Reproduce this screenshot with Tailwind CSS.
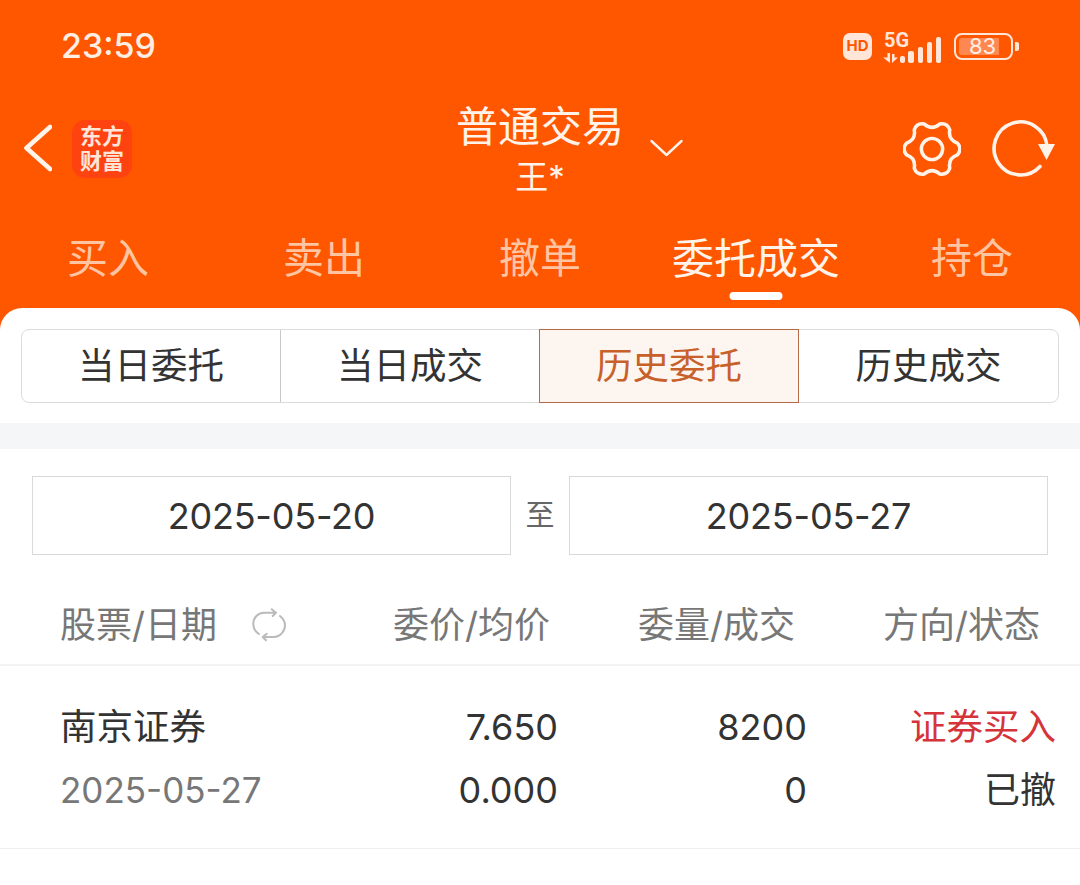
<!DOCTYPE html>
<html lang="zh-CN">
<head>
  <meta charset="UTF-8" />
  <meta name="viewport" content="width=device-width, initial-scale=1.0" />
  <title>普通交易</title>
  <script src="https://cdn.jsdelivr.net/npm/@tailwindcss/browser@4"></script>
</head>
<body class="w-[1080px] h-[885px] overflow-hidden bg-[#ff5600] font-['Inter','Noto_Sans_CJK_SC',sans-serif]">

  <!-- status bar -->
  <div class="h-[92px] flex items-center justify-between pl-[61px] pr-[61px] text-[#ffeee3]">
    <span class="text-[34px] font-medium leading-none">23:59</span>
    <div class="flex items-center gap-[11px]">
      <span class="w-[29px] h-[27px] rounded-[7px] bg-[#ffe6d8] text-[#ff5600] text-[15px] font-bold flex items-center justify-center">HD</span>
      <svg class="w-[60px] h-[44px]" viewBox="0 -8 60 44" fill="#ffe6d8">
        <text x="1" y="15" font-size="20" font-weight="700" font-family="Roboto">5G</text>
        <path d="M4.500 21H7v10L0 25.500h4.500zM9 22h2.500v3.500H15L9 31z" />
        <rect x="17" y="24" width="5" height="7" rx="2" />
        <rect x="25" y="19" width="6" height="12" rx="2" />
        <rect x="35" y="15" width="5" height="16" rx="2" />
        <rect x="44" y="10" width="5" height="21" rx="2" />
        <rect x="53" y="5" width="5" height="26" rx="2" />
      </svg>
      <div class="flex items-center gap-[2px]">
        <div class="relative w-[59px] h-[27px] rounded-[8px] border-[2px] border-[#ffe6d8] p-[3px]">
          <div class="h-full w-[40px] rounded-l-[3px] bg-[#ff8752]"></div>
          <span class="absolute inset-0 flex items-center justify-center pr-[2px] text-[22px] leading-none text-[#ffeee3]">83</span>
        </div>
        <span class="w-[4px] h-[9px] rounded-r-[2px] bg-[#ffe6d8]"></span>
      </div>
    </div>
  </div>

  <!-- title bar -->
  <div class="relative h-[113px] flex items-start justify-center text-[#fff3ea]">
    <svg class="absolute left-[24px] top-[32px] w-[28px] h-[48px]" viewBox="0 0 28 48" fill="none" stroke="#fff3ea" stroke-width="4.6" stroke-linecap="round" stroke-linejoin="round"><path d="M26 3 2.500 24 26 45" /></svg>
    <div class="absolute left-[72px] top-[28px] w-[60px] h-[58px] rounded-[13px] bg-[#ff4310] flex items-center justify-center text-center text-[#ffe6d8] text-[22px] font-bold leading-[25px]">
      <span>东方<br />财富</span>
    </div>
    <div class="flex flex-col items-center pt-[10px]">
      <span class="text-[42px] leading-[50px]">普通交易</span>
      <span class="text-[33px] leading-[50px]">王*</span>
    </div>
    <svg class="absolute left-[650px] top-[47px] w-[33px] h-[18px]" viewBox="0 0 33 18" fill="none" stroke="#fff3ea" stroke-width="2.4" stroke-linecap="round" stroke-linejoin="round"><path d="M1.500 2 16.500 16l15-14" /></svg>
    <svg class="absolute left-[903px] top-[28px] w-[58px] h-[58px]" viewBox="0 0 60 60" fill="none" stroke="#fff3ea" stroke-width="3.6" stroke-linejoin="round">
      <path d="M56.300 23.900Q61.500 30 56.300 36.100Q46.500 39.500 48.400 49.750Q45.750 57.280 37.900 55.800Q30 49 22.100 55.800Q14.250 57.280 11.600 49.750Q13.500 39.500 3.700 36.100Q-1.500 30 3.700 23.900Q13.500 20.500 11.600 10.250Q14.250 2.720 22.100 4.200Q30 11 37.900 4.200Q45.750 2.720 48.400 10.250Q46.500 20.500 56.300 23.900Z" />
      <circle cx="30" cy="30" r="11" />
    </svg>
    <svg class="absolute left-[991px] top-[27px] w-[66px] h-[60px]" viewBox="0 0 66 60" fill="none">
      <path d="M49 47.500A26.500 26.500 0 1 1 56 27" stroke="#fff3ea" stroke-width="3.6" stroke-linecap="round" />
      <path d="M47 25h17l-8.500 16Z" fill="#fff3ea" />
    </svg>
  </div>

  <!-- tabs -->
  <div class="h-[103px] grid grid-cols-5 text-center text-[41px] leading-none text-[#ffc4a2]">
    <div class="pt-[33px]">买入</div>
    <div class="pt-[33px]">卖出</div>
    <div class="pt-[33px]">撤单</div>
    <div class="relative pt-[33px] text-[#fff3ea] text-[42px]">委托成交
      <span class="absolute left-1/2 -translate-x-1/2 top-[87px] w-[53px] h-[8px] rounded-full bg-white"></span>
    </div>
    <div class="pt-[33px]">持仓</div>
  </div>

  <!-- content -->
  <div class="h-[577px] bg-white rounded-t-[22px] pt-[21px]">
    <div class="mx-[21px] h-[74px] grid grid-cols-[259px_258px_260px_1fr] border border-[#dcdcdc] rounded-[8px] text-[36.5px] text-[#333333]">
      <div class="flex items-center justify-center border-r border-[#c9c9c9]">当日委托</div>
      <div class="flex items-center justify-center">当日成交</div>
      <div class="-my-px flex items-center justify-center border border-[#b56a4a] bg-[#fdf5f0] text-[#c8602a]">历史委托</div>
      <div class="flex items-center justify-center">历史成交</div>
    </div>

    <div class="mt-[20px] h-[26px] bg-[#f5f6f8]"></div>

    <div class="mt-[27px] mx-[32px] flex items-center">
      <div class="w-[479px] h-[79px] border border-[#d9d9d9] flex items-center justify-center text-[36px] tracking-[-0.2px] text-[#333333]">2025-05-20</div>
      <div class="w-[58px] text-center text-[29px] text-[#666666]">至</div>
      <div class="w-[479px] h-[79px] border border-[#d9d9d9] flex items-center justify-center text-[36px] tracking-[-0.2px] text-[#333333]">2025-05-27</div>
    </div>

    <div class="h-[111px] border-b-[2px] border-[#f3f3f3] pl-[60px] pr-[40px] grid grid-cols-[302px_188px_245px_245px] items-center text-[36px] text-[#777777] pt-[30px]">
      <div class="flex items-center">
        <span>股票/日期</span>
        <svg class="ml-[35px] w-[34px] h-[34px]" viewBox="0 0 34 34" fill="none" stroke="#bbbbbb" stroke-width="2" stroke-linecap="round" stroke-linejoin="round">
          <path d="M7 26C3 23.500 1.300 20 1.300 15.700 1.300 9.500 6 5 12 4.800L24 4.700M19.700 1.300 24 4.700 20.700 8M28 8c3 2.500 5 6 5 9.300 0 6-5 11.500-11 11.700L10.700 29M14.700 25.700 10.700 29l3.300 3.300" />
        </svg>
      </div>
      <div class="text-right">委价/均价</div>
      <div class="text-right">委量/成交</div>
      <div class="text-right">方向/状态</div>
    </div>

    <div class="h-[183px] border-b border-[#eeeeee] pl-[60px] pr-[24px] grid grid-cols-[310px_188px_249px_249px] content-start pt-[30px] text-[36px] leading-[63px] text-[#333333]">
      <div class="text-[36.5px]">南京证券</div>
      <div class="text-right">7.650</div>
      <div class="text-right">8200</div>
      <div class="text-right text-[36.5px] text-[#d4343a]">证券买入</div>
      <div class="text-[35px] text-[#777777]">2025-05-27</div>
      <div class="text-right">0.000</div>
      <div class="text-right">0</div>
      <div class="text-right">已撤</div>
    </div>
  </div>
</body>
</html>
